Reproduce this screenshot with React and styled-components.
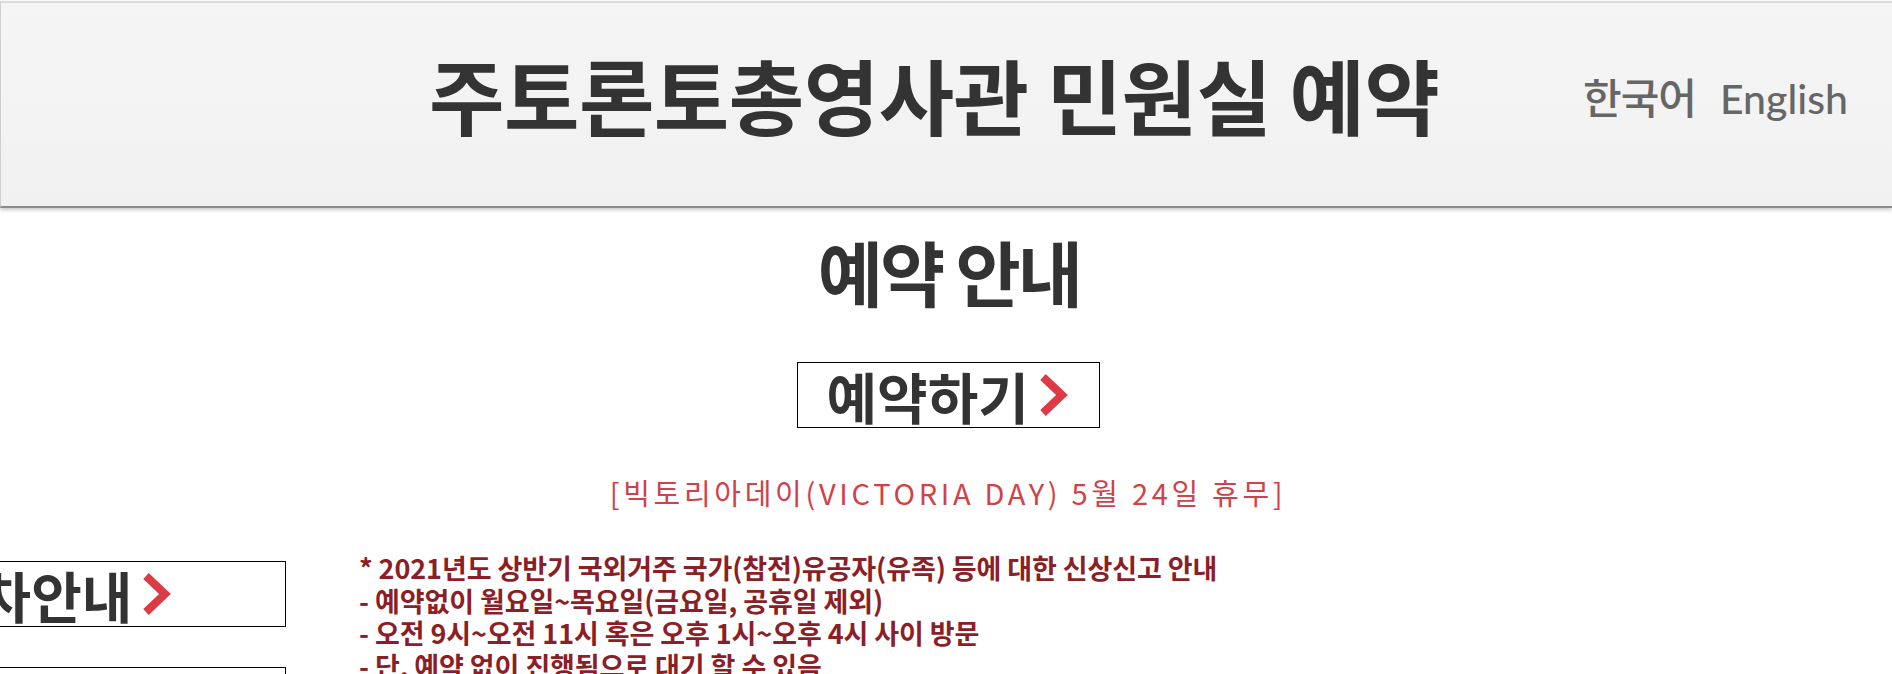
import React from "react";
import styled, { createGlobalStyle } from "styled-components";

const GlobalStyle = createGlobalStyle`
  html, body {
    margin: 0;
    padding: 0;
    background: #ffffff;
    overflow: hidden;
  }
  body {
    font-family: "Noto Sans CJK KR", "Noto Sans", sans-serif;
  }
`;

const Page = styled.div`
  width: 1892px;
  height: 674px;
  overflow: hidden;
  padding-top: 1px;
  box-sizing: border-box;
`;

const Header = styled.header`
  display: flex;
  align-items: center;
  height: 207px;
  padding: 0 44px 0 428px;
  box-sizing: border-box;
  background: linear-gradient(#f6f5f5, #f2f1f1);
  border-top: 2px solid #dcdcdc;
  border-left: 1px solid #cfcfcf;
  border-bottom: 2px solid #8c8c8c;
  box-shadow: 0 2px 4px rgba(0, 0, 0, 0.22);
`;

const Title = styled.h1`
  margin: 0 0 21px;
  font-family: "Noto Sans CJK KR", sans-serif;
  font-weight: 700;
  font-size: 82px;
  line-height: 1;
  letter-spacing: -0.5px;
  color: #333333;
  white-space: nowrap;
`;

const LangGroup = styled.nav`
  display: flex;
  align-items: baseline;
  gap: 24px;
  margin: 0 0 16px auto;
`;

const LangLink = styled.a`
  color: #666666;
  font-family: ${(p) => (p.$latin ? `"Lato", sans-serif` : `"Noto Sans CJK KR", sans-serif`)};
  font-size: ${(p) => (p.$latin ? "41px" : "42px")};
  font-weight: 500;
  letter-spacing: ${(p) => (p.$latin ? "0" : "-1px")};
  text-decoration: none;
  line-height: 1;
`;

const Main = styled.main`
  display: flex;
  flex-direction: column;
  align-items: center;
`;

const SectionTitle = styled.h2`
  margin: 27px 0 0;
  font-family: "Noto Sans CJK KR", sans-serif;
  font-weight: 700;
  font-size: 71px;
  line-height: 1;
  letter-spacing: -3px;
  color: #333333;
  padding-left: 6px;
`;

const LinkBox = styled.a`
  display: inline-flex;
  align-items: center;
  gap: 9px;
  box-sizing: border-box;
  width: ${(p) => p.$width || "303px"};
  height: 66px;
  padding-left: ${(p) => p.$pad || "29px"};
  border: 1px solid #000000;
  background: #ffffff;
  color: #333333;
  font-family: "Noto Sans CJK KR", sans-serif;
  font-weight: 700;
  font-size: 55px;
  letter-spacing: 0;
  text-decoration: none;
  line-height: 1;
`;

const ReserveBox = styled(LinkBox)`
  margin-top: 56px;
  margin-left: 4px;
`;

const Chevron = styled.svg`
  width: 30px;
  height: 44px;
  flex: none;
`;

const Holiday = styled.p`
  margin: 50px 0 0;
  font-family: "Noto Sans CJK KR", sans-serif;
  font-weight: 400;
  font-size: 29px;
  line-height: 1;
  letter-spacing: 3.7px;
  color: #d0424a;
  padding-left: 4px;
`;

const InfoRow = styled.div`
  align-self: stretch;
  display: flex;
  gap: 73px;
  margin-top: 54px;
`;

const SideColumn = styled.div`
  display: flex;
  flex-direction: column;
  gap: 40px;
  margin-left: -90px;
`;

const NoticeList = styled.ul`
  margin: -9px 0 0;
  padding: 0;
  list-style: none;
`;

const NoticeItem = styled.li`
  font-family: "Noto Sans CJK KR", sans-serif;
  font-weight: 700;
  font-size: 27px;
  line-height: 32.6px;
  letter-spacing: -0.1px;
  color: #8b1f27;
  white-space: nowrap;
`;

const Arrow = () => (
  <Chevron viewBox="0 0 30 44">
    <polyline points="5,4 24,22 5,40" fill="none" stroke="#dc3a44" strokeWidth="8" />
  </Chevron>
);

const notices = [
  "* 2021년도 상반기 국외거주 국가(참전)유공자(유족) 등에 대한 신상신고 안내",
  "- 예약없이 월요일~목요일(금요일, 공휴일 제외)",
  "- 오전 9시~오전 11시 혹은 오후 1시~오후 4시 사이 방문",
  "- 단, 예약 없이 진행됨으로 대기 할 수 있음",
];

const App = () => (
  <Page>
    <GlobalStyle />
    <Header>
      <Title>주토론토총영사관 민원실 예약</Title>
      <LangGroup>
        <LangLink href="#">한국어</LangLink>
        <LangLink href="#" $latin>
          English
        </LangLink>
      </LangGroup>
    </Header>

    <Main>
      <SectionTitle>예약 안내</SectionTitle>
      <ReserveBox href="#">
        예약하기
        <Arrow />
      </ReserveBox>
      <Holiday>[빅토리아데이(VICTORIA DAY) 5월 24일 휴무]</Holiday>

      <InfoRow>
        <SideColumn>
          <LinkBox href="#" $width="376px" $pad="19px">
            주차안내
            <Arrow />
          </LinkBox>
          <LinkBox href="#" $width="376px" $pad="19px">
            오시는길
            <Arrow />
          </LinkBox>
        </SideColumn>
        <NoticeList>
          {notices.map((line) => (
            <NoticeItem key={line}>{line}</NoticeItem>
          ))}
        </NoticeList>
      </InfoRow>
    </Main>
  </Page>
);

export default App;
